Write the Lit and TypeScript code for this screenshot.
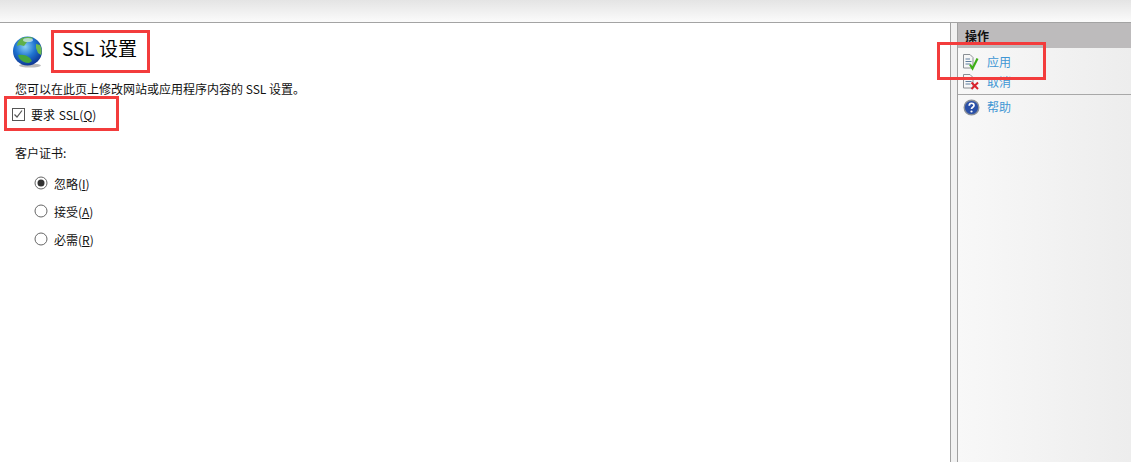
import { LitElement, html, css, svg } from "lit";
import { customElement } from "lit/decorators.js";

const docIcon = svg`<path d="M.5.500h6.500l3 3v10.500h-9.500z" fill="#f7f7f7" stroke="#8a8f94"/><path d="M2.500 5h4.500M2.500 7.500h6M2.500 10h5" stroke="#5f7f9f" fill="none"/>`;

@customElement("app-root")
export class AppRoot extends LitElement {
  static styles = css`
    :host { display: block; position: relative; width: 1131px; height: 462px; overflow: hidden; background: #fff;
      font-family: "Noto Sans CJK SC", "Liberation Sans", sans-serif; font-size: 12px; color: #111; }
    .top { box-sizing: border-box; border-bottom: 1px solid #a3a3a3; background: linear-gradient(#e4e4e4, #fbfbfb); height: 23px; }
    .body { display: flex; height: 439px; }
    .main { box-sizing: border-box; border-right: 1px solid #a0a0a0; padding: 11px 0 0 12px; flex: none; width: 951px; }
    .gutter { width: 6px; background: #f1f1f1; flex: none; }
    .side { flex: 1; border-left: 1px solid #a0a0a0; background: linear-gradient(90deg, #f8f8f8, #ededed); }
    .head { height: 25px; box-sizing: border-box; background: #bdbbbc; padding: 4px 0 0 7px; font-weight: 700; line-height: 17px; color: #111; }
    .act { display: flex; align-items: center; gap: 7px; padding-left: 5px; color: #3f97d4; height: 20px; line-height: 20px; }
    .act svg { flex: none; }
    .sep { border-top: 1px solid #a8a8a8; margin: 2px 0 2px; }
    .title-row { display: flex; align-items: center; gap: 18px; height: 32px; }
    .globe { position: relative; top: 2px; flex: none; }
    h1 { margin: 0; font-size: 19px; font-weight: 400; line-height: 28px; color: #000; position: relative; top: -2px; }
    .desc { margin: 14px 0 0 3px; line-height: 18px; height: 18px; }
    .check { display: flex; align-items: center; gap: 6px; margin-top: 7px; height: 18px; }
    .box { width: 13px; height: 13px; box-sizing: border-box; border: 1px solid #555; display: block; flex: none; background: #fff; }
    .check span { word-spacing: 1px; }
    .group { margin: 21px 0 0 3px; line-height: 18px; }
    .radios { display: flex; flex-direction: column; gap: 10px; margin: 12px 0 0 22px; }
    .radio { display: flex; align-items: center; gap: 6px; height: 18px; }
    .radio svg { flex: none; }
    u { text-underline-offset: 1px; }
    .mark { position: absolute; border: 3px solid #f33c3c; box-sizing: border-box; pointer-events: none; }
    .m1 { left: 51px; top: 30px; width: 99px; height: 43px; }
    .m2 { left: 4px; top: 96px; width: 115px; height: 35px; }
    .m3 { left: 937px; top: 42px; width: 109px; height: 38px; }
  `;

  private radio(on: boolean) {
    return html`<svg width="14" height="14" viewBox="0 0 14 14">
      <circle cx="7" cy="7" r="6" fill="#fff" stroke="#666"/>
      ${on ? svg`<circle cx="7" cy="7" r="3.500" fill="#333"/>` : ""}
    </svg>`;
  }

  render() {
    return html`
      <div class="top"></div>
      <div class="body">
        <div class="main">
          <div class="title-row">
            <svg class="globe" width="32" height="32" viewBox="0 0 32 32">
              <defs>
                <radialGradient id="g" cx="0.42" cy="0.35" r="0.7">
                  <stop offset="0" stop-color="#8ad0f5"/><stop offset="0.5" stop-color="#1f74d0"/><stop offset="1" stop-color="#0b2e8c"/>
                </radialGradient>
              </defs>
              <ellipse cx="18" cy="29.500" rx="11" ry="2" fill="#bbb"/>
              <circle cx="15.500" cy="15" r="14.500" fill="url(#g)"/>
              <path d="M9 2.500c4-2 9-2 12-.5l-2 3-4 1-3 4-4-1-3 1c0-3 2-6 4-7.500z" fill="#5fb04a"/>
              <path d="M24 8l4 1c2 3 2 7 1 10l-3-2-2-5z" fill="#6dba4d"/>
              <path d="M6 19c4-1 9 0 12 3l2 3-3 2c-4 0-8-2-10-5z" fill="#45a53d"/>
              <ellipse cx="16" cy="4" rx="5" ry="2" fill="#d6eefb" opacity=".7"/>
            </svg>
            <h1>SSL 设置</h1>
          </div>
          <div class="desc">您可以在此页上修改网站或应用程序内容的 SSL 设置。</div>
          <div class="check">
            <svg class="box" viewBox="0 0 11 11"><path d="M1.500 5.500l2.500 2.500 5-6.500" fill="none" stroke="#555" stroke-width="1.200"/></svg>
            <span>要求 SSL(<u>Q</u>)</span>
          </div>
          <div class="group">客户证书:</div>
          <div class="radios">
            <div class="radio">${this.radio(true)}<span>忽略(<u>I</u>)</span></div>
            <div class="radio">${this.radio(false)}<span>接受(<u>A</u>)</span></div>
            <div class="radio">${this.radio(false)}<span>必需(<u>R</u>)</span></div>
          </div>
        </div>
        <div class="gutter"></div>
        <div class="side">
          <div class="head">操作</div>
          <div class="act" style="margin-top:4px">
            <svg width="17" height="17" viewBox="0 0 17 17">${docIcon}<path d="M7 10.500l2.500 4 5-10" fill="none" stroke="#3fae17" stroke-width="2.200"/></svg>
            <span>应用</span>
          </div>
          <div class="act">
            <svg width="17" height="17" viewBox="0 0 17 17">${docIcon}<path d="M8.500 8.500l6.500 6.500M15 8.500l-6.500 6.500" fill="none" stroke="#d9232c" stroke-width="2"/></svg>
            <span>取消</span>
          </div>
          <div class="sep"></div>
          <div class="act">
            <svg width="17" height="17" viewBox="0 0 17 17">
              <circle cx="8.500" cy="8.500" r="7.300" fill="#2a50a8" stroke="#8b9098" stroke-width="1.400"/>
              <path d="M6.200 6.700c0-3.200 4.800-3.200 4.800-.3 0 1.900-2.500 1.900-2.500 3.700" fill="none" stroke="#fff" stroke-width="1.700"/>
              <circle cx="8.500" cy="12.500" r="1.100" fill="#fff"/>
            </svg>
            <span>帮助</span>
          </div>
        </div>
      </div>
      <div class="mark m1"></div>
      <div class="mark m2"></div>
      <div class="mark m3"></div>
    `;
  }
}
